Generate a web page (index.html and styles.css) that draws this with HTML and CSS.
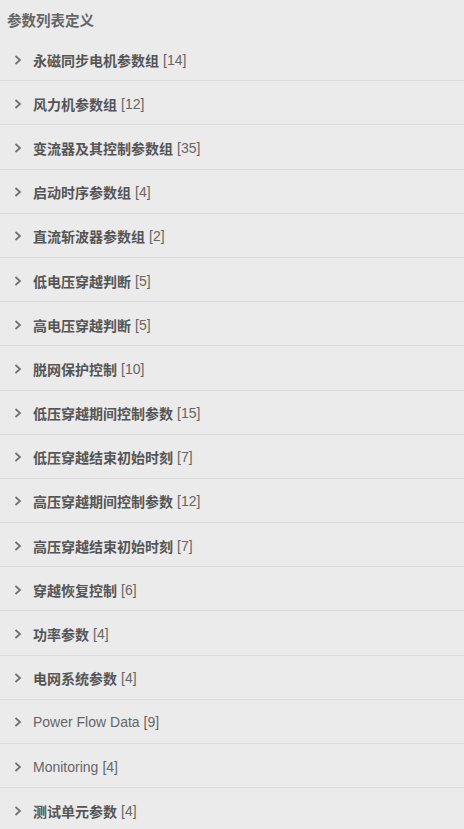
FILE: index.html
```html
<!DOCTYPE html>
<html lang="zh">
<head>
<meta charset="utf-8">
<title>参数列表定义</title>
<link rel="stylesheet" href="styles.css">
</head>
<body>
<div class="panel">
  <div class="panel-title">参数列表定义</div>
  <ul class="group-list">
    <li class="group"><span class="chev"><svg viewBox="0 0 8 10" width="8" height="10"><path d="M1.5 1 L6 5 L1.5 9" fill="none" stroke="#6f6f6f" stroke-width="1.7"/></svg></span><span class="name">永磁同步电机参数组</span><span class="count">[14]</span></li>
    <li class="group"><span class="chev"><svg viewBox="0 0 8 10" width="8" height="10"><path d="M1.5 1 L6 5 L1.5 9" fill="none" stroke="#6f6f6f" stroke-width="1.7"/></svg></span><span class="name">风力机参数组</span><span class="count">[12]</span></li>
    <li class="group"><span class="chev"><svg viewBox="0 0 8 10" width="8" height="10"><path d="M1.5 1 L6 5 L1.5 9" fill="none" stroke="#6f6f6f" stroke-width="1.7"/></svg></span><span class="name">变流器及其控制参数组</span><span class="count">[35]</span></li>
    <li class="group"><span class="chev"><svg viewBox="0 0 8 10" width="8" height="10"><path d="M1.5 1 L6 5 L1.5 9" fill="none" stroke="#6f6f6f" stroke-width="1.7"/></svg></span><span class="name">启动时序参数组</span><span class="count">[4]</span></li>
    <li class="group"><span class="chev"><svg viewBox="0 0 8 10" width="8" height="10"><path d="M1.5 1 L6 5 L1.5 9" fill="none" stroke="#6f6f6f" stroke-width="1.7"/></svg></span><span class="name">直流斩波器参数组</span><span class="count">[2]</span></li>
    <li class="group"><span class="chev"><svg viewBox="0 0 8 10" width="8" height="10"><path d="M1.5 1 L6 5 L1.5 9" fill="none" stroke="#6f6f6f" stroke-width="1.7"/></svg></span><span class="name">低电压穿越判断</span><span class="count">[5]</span></li>
    <li class="group"><span class="chev"><svg viewBox="0 0 8 10" width="8" height="10"><path d="M1.5 1 L6 5 L1.5 9" fill="none" stroke="#6f6f6f" stroke-width="1.7"/></svg></span><span class="name">高电压穿越判断</span><span class="count">[5]</span></li>
    <li class="group"><span class="chev"><svg viewBox="0 0 8 10" width="8" height="10"><path d="M1.5 1 L6 5 L1.5 9" fill="none" stroke="#6f6f6f" stroke-width="1.7"/></svg></span><span class="name">脱网保护控制</span><span class="count">[10]</span></li>
    <li class="group"><span class="chev"><svg viewBox="0 0 8 10" width="8" height="10"><path d="M1.5 1 L6 5 L1.5 9" fill="none" stroke="#6f6f6f" stroke-width="1.7"/></svg></span><span class="name">低压穿越期间控制参数</span><span class="count">[15]</span></li>
    <li class="group"><span class="chev"><svg viewBox="0 0 8 10" width="8" height="10"><path d="M1.5 1 L6 5 L1.5 9" fill="none" stroke="#6f6f6f" stroke-width="1.7"/></svg></span><span class="name">低压穿越结束初始时刻</span><span class="count">[7]</span></li>
    <li class="group"><span class="chev"><svg viewBox="0 0 8 10" width="8" height="10"><path d="M1.5 1 L6 5 L1.5 9" fill="none" stroke="#6f6f6f" stroke-width="1.7"/></svg></span><span class="name">高压穿越期间控制参数</span><span class="count">[12]</span></li>
    <li class="group"><span class="chev"><svg viewBox="0 0 8 10" width="8" height="10"><path d="M1.5 1 L6 5 L1.5 9" fill="none" stroke="#6f6f6f" stroke-width="1.7"/></svg></span><span class="name">高压穿越结束初始时刻</span><span class="count">[7]</span></li>
    <li class="group"><span class="chev"><svg viewBox="0 0 8 10" width="8" height="10"><path d="M1.5 1 L6 5 L1.5 9" fill="none" stroke="#6f6f6f" stroke-width="1.7"/></svg></span><span class="name">穿越恢复控制</span><span class="count">[6]</span></li>
    <li class="group"><span class="chev"><svg viewBox="0 0 8 10" width="8" height="10"><path d="M1.5 1 L6 5 L1.5 9" fill="none" stroke="#6f6f6f" stroke-width="1.7"/></svg></span><span class="name">功率参数</span><span class="count">[4]</span></li>
    <li class="group"><span class="chev"><svg viewBox="0 0 8 10" width="8" height="10"><path d="M1.5 1 L6 5 L1.5 9" fill="none" stroke="#6f6f6f" stroke-width="1.7"/></svg></span><span class="name">电网系统参数</span><span class="count">[4]</span></li>
    <li class="group"><span class="chev"><svg viewBox="0 0 8 10" width="8" height="10"><path d="M1.5 1 L6 5 L1.5 9" fill="none" stroke="#6f6f6f" stroke-width="1.7"/></svg></span><span class="name latin">Power Flow Data</span><span class="count">[9]</span></li>
    <li class="group"><span class="chev"><svg viewBox="0 0 8 10" width="8" height="10"><path d="M1.5 1 L6 5 L1.5 9" fill="none" stroke="#6f6f6f" stroke-width="1.7"/></svg></span><span class="name latin">Monitoring</span><span class="count">[4]</span></li>
    <li class="group"><span class="chev"><svg viewBox="0 0 8 10" width="8" height="10"><path d="M1.5 1 L6 5 L1.5 9" fill="none" stroke="#6f6f6f" stroke-width="1.7"/></svg></span><span class="name">测试单元参数</span><span class="count">[4]</span></li>
  </ul>
</div>
</body>
</html>
```

FILE: styles.css
```css
html, body {
  margin: 0;
  padding: 0;
  background: #ebebeb;
}

body {
  font-family: "Liberation Sans", "Noto Sans CJK SC", sans-serif;
  color: #555;
}

.panel-title {
  height: 37px;
  box-sizing: border-box;
  padding-left: 7px;
  padding-top: 2px;
  display: flex;
  align-items: center;
  font-size: 14.5px;
  font-weight: 600;
  color: #666;
}

.group-list {
  list-style: none;
  margin: 0;
  padding: 0;
}

.group {
  height: 44.19px;
  box-sizing: border-box;
  border-bottom: 1px solid #dcdcdc;
  display: flex;
  align-items: center;
  padding-left: 14px;
  padding-top: 2px;
  font-size: 14px;
}

.chev {
  width: 19px;
  display: flex;
  align-items: center;
}

.chev svg {
  display: block;
}

.name {
  font-weight: 600;
  color: #555;
}

.name.latin {
  font-weight: 400;
  color: #666;
}

.count {
  margin-left: 4px;
  color: #666;
}
```
